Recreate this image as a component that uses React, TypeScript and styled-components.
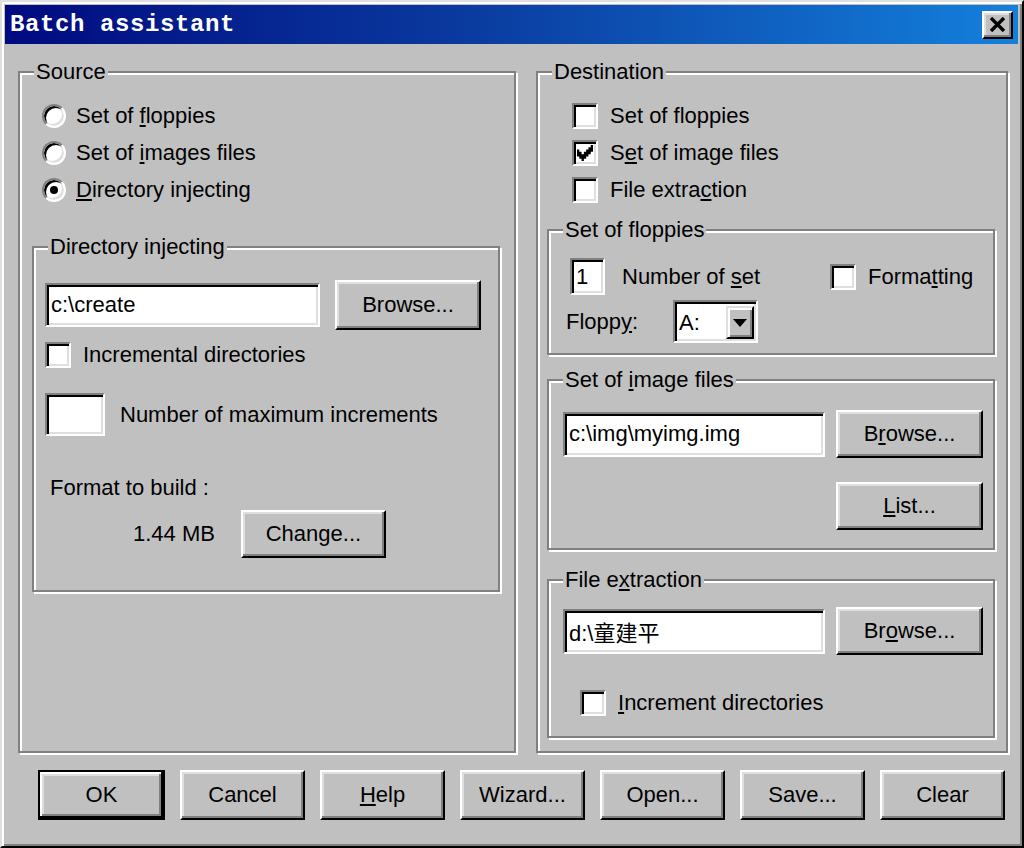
import React from "react";
import styled, { createGlobalStyle } from "styled-components";

const Global = createGlobalStyle`
  html, body { margin: 0; padding: 0; background: #c0c0c0; }
  body {
    font-family: "Liberation Sans", Arial, "Noto Sans CJK SC", sans-serif;
    font-size: 22px;
    color: #000;
  }
  * { box-sizing: border-box; }
`;

const FONT = `"Liberation Sans", Arial, "Noto Sans CJK SC", sans-serif`;

const Window = styled.div`
  width: 1024px;
  height: 848px;
  background: #c0c0c0;
  border: 2px solid;
  border-color: #dfdfdf #000 #000 #dfdfdf;
  box-shadow: inset 2px 2px #fff, inset -2px -2px #808080;
  padding: 3px 4px 0 3px;
  display: flex;
  flex-direction: column;
`;

const TitleBar = styled.div`
  height: 39px;
  background: linear-gradient(90deg, #000a80 0%, #0a3a9e 45%, #1480dc 100%);
  display: flex;
  align-items: center;
  justify-content: space-between;
  padding: 0 5px 0 5px;
`;

const TitleText = styled.span`
  color: #fff;
  font-family: "Liberation Mono", "Courier New", monospace;
  font-weight: bold;
  font-size: 24px;
  letter-spacing: 0.6px;
`;

const CloseBtn = styled.div`
  width: 31px;
  height: 28px;
  background: #c0c0c0;
  border: 2px solid;
  border-color: #fff #000 #000 #fff;
  box-shadow: inset -2px -2px #808080, inset 2px 2px #dfdfdf;
  display: flex;
  align-items: center;
  justify-content: center;
`;

const Main = styled.div`
  display: grid;
  grid-template-columns: 498px 472px;
  column-gap: 20px;
  margin-top: 16px;
  padding-left: 13px;
`;

const Group = styled.fieldset<{ $h: number; $m?: string }>`
  margin: ${(p) => p.$m || "0"};
  padding: 0;
  min-width: 0;
  height: ${(p) => p.$h}px;
  border: 2px solid #808080;
  box-shadow: inset 2px 2px #fff, 2px 2px #fff;
`;

const Legend = styled.legend`
  margin-left: 14px;
  padding: 0 2px;
  font-size: 22px;
  line-height: 24px;
  background: #c0c0c0;
`;

const Stack = styled.div<{ $pad: string }>`
  display: flex;
  flex-direction: column;
  padding: ${(p) => p.$pad};
`;

const OptionRow = styled.label<{ $gap: number }>`
  height: 37px;
  display: flex;
  align-items: center;
  gap: ${(p) => p.$gap}px;
  line-height: 24px;
`;

const Row = styled.div<{ $mt: number; $pl?: number; $h: number; $gap?: number }>`
  margin-top: ${(p) => p.$mt}px;
  padding-left: ${(p) => p.$pl || 0}px;
  height: ${(p) => p.$h}px;
  display: flex;
  align-items: center;
  gap: ${(p) => p.$gap || 0}px;
  line-height: 24px;
  white-space: nowrap;
`;

const Text = styled.span<{ $w?: number; $ml?: number }>`
  display: inline-block;
  width: ${(p) => (p.$w ? `${p.$w}px` : "auto")};
  margin-left: ${(p) => p.$ml || 0}px;
  line-height: 24px;
  white-space: nowrap;
`;

const Radio = styled.span<{ $on?: boolean }>`
  width: 24px;
  height: 24px;
  border-radius: 50%;
  background: #fff;
  border: 2px solid;
  border-color: #808080 #fff #fff #808080;
  box-shadow: inset 2px 2px 0 #000, inset -2px -2px 0 #dfdfdf;
  position: relative;
  flex: none;
  &::after {
    content: "";
    display: ${(p) => (p.$on ? "block" : "none")};
    position: absolute;
    width: 8px;
    height: 8px;
    border-radius: 50%;
    background: #000;
    left: 6px;
    top: 6px;
  }
`;

const Box = styled.span`
  width: 26px;
  height: 26px;
  background: #fff;
  border: 2px solid;
  border-color: #808080 #fff #fff #808080;
  box-shadow: inset 2px 2px #000, inset -2px -2px #dfdfdf;
  display: flex;
  align-items: center;
  justify-content: center;
  flex: none;
`;

const Field = styled.input<{ $w: number; $h: number }>`
  width: ${(p) => p.$w}px;
  height: ${(p) => p.$h}px;
  background: #fff;
  border: 2px solid;
  border-color: #808080 #fff #fff #808080;
  box-shadow: inset 2px 2px #000, inset -2px -2px #dfdfdf;
  padding: 0 0 0 4px;
  margin: 0;
  font-family: ${FONT};
  font-size: 22px;
  color: #000;
  outline: none;
  flex: none;
`;

const Combo = styled.div`
  width: 85px;
  height: 43px;
  background: #fff;
  border: 2px solid;
  border-color: #808080 #fff #fff #808080;
  box-shadow: inset 2px 2px #000, inset -2px -2px #dfdfdf;
  display: flex;
  align-items: stretch;
  padding: 4px 2px 2px 4px;
  flex: none;
`;

const ComboText = styled.span`
  flex: 1;
  line-height: 33px;
`;

const ComboBtn = styled.span`
  width: 28px;
  background: #c0c0c0;
  border: 2px solid;
  border-color: #dfdfdf #000 #000 #dfdfdf;
  box-shadow: inset 2px 2px #fff, inset -2px -2px #808080;
  display: flex;
  align-items: center;
  justify-content: center;
`;

const Btn = styled.button<{ $w: number; $h: number; $def?: boolean }>`
  width: ${(p) => p.$w}px;
  height: ${(p) => p.$h}px;
  flex: none;
  margin: 0;
  padding: 0;
  background: #c0c0c0;
  font-family: ${FONT};
  font-size: 22px;
  color: #000;
  border: 2px solid;
  border-color: ${(p) => (p.$def ? "#000" : "#fff #000 #000 #fff")};
  box-shadow: ${(p) =>
    p.$def
      ? "inset -2px -2px #000, inset 2px 2px #fff, inset -4px -4px #808080, inset 4px 4px #dfdfdf"
      : "inset -2px -2px #808080, inset 2px 2px #dfdfdf"};
`;

const RightAlign = styled.div<{ $mt: number; $pr: number }>`
  margin-top: ${(p) => p.$mt}px;
  padding-right: ${(p) => p.$pr}px;
  display: flex;
  justify-content: flex-end;
`;

const ButtonBar = styled.div`
  margin-top: 17px;
  padding-left: 33px;
  display: flex;
  gap: 15px;
`;

const Check = () => (
  <svg width="16" height="16" viewBox="0 0 7 7">
    <path d="M0 2h1v1h1v1h1V3h1V2h1V1h1V0h1v3h-1v1h-1v1h-1v1h-1v1H2V6H1V5H0z" fill="#000" />
  </svg>
);

const CheckBox: React.FC<{ on?: boolean }> = ({ on }) => <Box>{on ? <Check /> : null}</Box>;

const Arrow = () => (
  <svg width="14" height="8" viewBox="0 0 7 4">
    <path d="M0 0h7L3.5 4z" fill="#000" />
  </svg>
);

const XIcon = () => (
  <svg width="17" height="15" viewBox="0 0 17 15">
    <path d="M2 1L15 14M15 1L2 14" stroke="#000" strokeWidth="3.4" />
  </svg>
);

export default function App() {
  return (
    <>
      <Global />
      <Window>
        <TitleBar>
          <TitleText>Batch assistant</TitleText>
          <CloseBtn>
            <XIcon />
          </CloseBtn>
        </TitleBar>

        <Main>
          <Group $h={693}>
            <Legend>Source</Legend>
            <Stack $pad="13px 0 0 22px">
              <OptionRow $gap={10}>
                <Radio />
                <span>Set of <u>f</u>loppies</span>
              </OptionRow>
              <OptionRow $gap={10}>
                <Radio />
                <span>Set of <u>i</u>mages files</span>
              </OptionRow>
              <OptionRow $gap={10}>
                <Radio $on />
                <span><u>D</u>irectory injecting</span>
              </OptionRow>
            </Stack>

            <Group $h={357} $m="27px 14px 0 12px">
              <Legend>Directory injecting</Legend>
              <Stack $pad="0 0 0 11px">
                <Row $mt={21} $h={50} $gap={15}>
                  <Field $w={275} $h={44} defaultValue="c:\create" readOnly />
                  <Btn $w={146} $h={50}>Browse...</Btn>
                </Row>
                <Row $mt={12} $h={26} $gap={12}>
                  <CheckBox />
                  <Text>Incremental directories</Text>
                </Row>
                <Row $mt={25} $h={43} $gap={15}>
                  <Field $w={60} $h={43} readOnly />
                  <Text>Number of maximum increments</Text>
                </Row>
                <Row $mt={40} $pl={5} $h={24}>
                  <Text>Format to build :</Text>
                </Row>
                <Row $mt={10} $pl={88} $h={48} $gap={26}>
                  <Text>1.44 MB</Text>
                  <Btn $w={145} $h={48}>Change...</Btn>
                </Row>
              </Stack>
            </Group>
          </Group>

          <Group $h={693}>
            <Legend>Destination</Legend>
            <Stack $pad="13px 0 0 34px">
              <OptionRow $gap={12}>
                <CheckBox />
                <span>Set of floppies</span>
              </OptionRow>
              <OptionRow $gap={12}>
                <CheckBox on />
                <span>S<u>e</u>t of image files</span>
              </OptionRow>
              <OptionRow $gap={12}>
                <CheckBox />
                <span>File extra<u>c</u>tion</span>
              </OptionRow>
            </Stack>

            <Group $h={137} $m="10px 11px 0 9px">
              <Legend>Set of floppies</Legend>
              <Stack $pad="0">
                <Row $mt={16} $pl={21} $h={37} $gap={17}>
                  <Field $w={35} $h={37} defaultValue="1" readOnly />
                  <Text $w={191}>Number of <u>s</u>et</Text>
                  <CheckBox />
                  <Text $ml={-5}>Forma<u>t</u>ting</Text>
                </Row>
                <Row $mt={5} $pl={17} $h={43}>
                  <Text $w={107}>Flopp<u>y</u>:</Text>
                  <Combo>
                    <ComboText>A:</ComboText>
                    <ComboBtn>
                      <Arrow />
                    </ComboBtn>
                  </Combo>
                </Row>
              </Stack>
            </Group>

            <Group $h={182} $m="13px 11px 0 9px">
              <Legend>Set of <u>i</u>mage files</Legend>
              <Stack $pad="0">
                <Row $mt={18} $pl={14} $h={48} $gap={11}>
                  <Field $w={262} $h={45} defaultValue="c:\img\myimg.img" readOnly />
                  <Btn $w={147} $h={48}>B<u>r</u>owse...</Btn>
                </Row>
                <RightAlign $mt={24} $pr={10}>
                  <Btn $w={147} $h={48}><u>L</u>ist...</Btn>
                </RightAlign>
              </Stack>
            </Group>

            <Group $h={170} $m="18px 11px 0 9px">
              <Legend>File e<u>x</u>traction</Legend>
              <Stack $pad="0">
                <Row $mt={15} $pl={14} $h={48} $gap={11}>
                  <Field $w={262} $h={45} defaultValue="d:\童建平" readOnly />
                  <Btn $w={147} $h={48}>Br<u>o</u>wse...</Btn>
                </Row>
                <Row $mt={35} $pl={31} $h={26} $gap={12}>
                  <CheckBox />
                  <Text><u>I</u>ncrement directories</Text>
                </Row>
              </Stack>
            </Group>
          </Group>
        </Main>

        <ButtonBar>
          <Btn $w={127} $h={50} $def>OK</Btn>
          <Btn $w={125} $h={50}>Cancel</Btn>
          <Btn $w={125} $h={50}><u>H</u>elp</Btn>
          <Btn $w={125} $h={50}>Wizard...</Btn>
          <Btn $w={125} $h={50}>Open...</Btn>
          <Btn $w={125} $h={50}>Save...</Btn>
          <Btn $w={125} $h={50}>Clear</Btn>
        </ButtonBar>
      </Window>
    </>
  );
}
